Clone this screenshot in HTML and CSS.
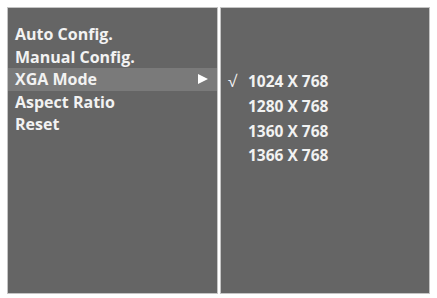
FILE: index.html
```html
<!DOCTYPE html>
<html>
<head>
<meta charset="utf-8">
<link rel="stylesheet" href="styles.css">
</head>
<body>
<div class="screen">
  <div class="panel left">
    <ul class="menu">
      <li class="item">Auto Config.</li>
      <li class="item">Manual Config.</li>
      <li class="item active">XGA Mode<svg class="arrow" width="10" height="10" viewBox="0 0 10 10"><polygon points="0,0 10,5 0,10" fill="#ffffff"/></svg></li>
      <li class="item">Aspect Ratio</li>
      <li class="item">Reset</li>
    </ul>
  </div>
  <div class="panel right">
    <ul class="options">
      <li class="opt"><span class="check">&#8730;</span>1024 X 768</li>
      <li class="opt"><span class="check"></span>1280 X 768</li>
      <li class="opt"><span class="check"></span>1360 X 768</li>
      <li class="opt"><span class="check"></span>1366 X 768</li>
    </ul>
  </div>
</div>
</body>
</html>
```
FILE: styles.css
```css
html, body {
  margin: 0;
  padding: 0;
  background: #ffffff;
}
body {
  width: 437px;
  height: 298px;
  overflow: hidden;
  font-family: "Open Sans", "Liberation Sans", sans-serif;
  font-weight: 700;
  color: #f2f2f2;
}
.screen {
  display: flex;
  gap: 2px;
  padding: 7px 0 0 7px;
}
.panel {
  height: 285px;
  background: #656565;
  border: 1px solid #c4c4c4;
  box-sizing: content-box;
}
.left { width: 209px; }
.right { width: 208px; }
.menu, .options {
  list-style: none;
  margin: 0;
  padding: 0;
}
.menu { padding-top: 15px; }
.item {
  display: flex;
  align-items: center;
  height: 22.5px;
  padding-left: 7px;
  padding-right: 9px;
  font-size: 16px;
  line-height: 22px;
}
.item.active {
  background: #7a7a7a;
}
.arrow {
  margin-left: auto;
}
.options { padding-top: 61px; }
.opt {
  display: flex;
  align-items: center;
  height: 24.7px;
  padding-left: 7px;
  font-size: 15.5px;
}
.check {
  display: inline-block;
  width: 20px;
  font-weight: 400;
  font-size: 16px;
}
```
